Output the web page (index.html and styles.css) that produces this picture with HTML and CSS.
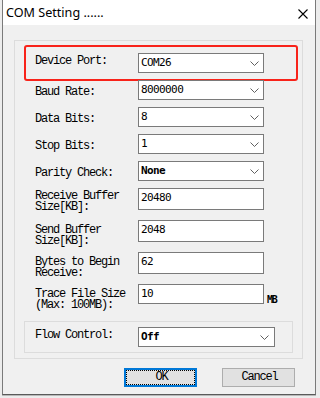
FILE: index.html
```html
<!DOCTYPE html>
<html>
<head>
  <title>COM Setting</title>
  <link rel="stylesheet" href="styles.css">
</head>
<body>
  <div class="window">
    <div class="titlebar">
      <span class="title">COM Setting ......</span>
      <svg class="close" width="10" height="10" viewBox="0 0 10 10">
        <path d="M0.5 0.5 L9.5 9.5 M9.5 0.5 L0.5 9.5" stroke="#000" stroke-width="1.1" fill="none"/>
      </svg>
    </div>

    <div class="client">
      <div class="group main">
        <div class="row marked">
          <label class="lbl">Device Port:</label>
          <div class="combo"><span>COM26</span><svg class="chev" width="9" height="5" viewBox="0 0 9 5"><path d="M0.5 0.5 L4.5 4.5 L8.5 0.5" stroke="#606060" fill="none"/></svg></div>
        </div>
        <div class="row">
          <label class="lbl">Baud Rate:</label>
          <div class="combo"><span>8000000</span><svg class="chev" width="9" height="5" viewBox="0 0 9 5"><path d="M0.5 0.5 L4.5 4.5 L8.5 0.5" stroke="#606060" fill="none"/></svg></div>
        </div>
        <div class="row">
          <label class="lbl">Data Bits:</label>
          <div class="combo"><span>8</span><svg class="chev" width="9" height="5" viewBox="0 0 9 5"><path d="M0.5 0.5 L4.5 4.5 L8.5 0.5" stroke="#606060" fill="none"/></svg></div>
        </div>
        <div class="row">
          <label class="lbl">Stop Bits:</label>
          <div class="combo"><span>1</span><svg class="chev" width="9" height="5" viewBox="0 0 9 5"><path d="M0.5 0.5 L4.5 4.5 L8.5 0.5" stroke="#606060" fill="none"/></svg></div>
        </div>
        <div class="row">
          <label class="lbl">Parity Check:</label>
          <div class="combo"><span class="bold">None</span><svg class="chev" width="9" height="5" viewBox="0 0 9 5"><path d="M0.5 0.5 L4.5 4.5 L8.5 0.5" stroke="#606060" fill="none"/></svg></div>
        </div>
        <div class="row tall first">
          <label class="lbl">Receive Buffer<br>Size[KB]:</label>
          <input class="edit" type="text" value="20480">
        </div>
        <div class="row tall">
          <label class="lbl">Send Buffer<br>Size[KB]:</label>
          <input class="edit" type="text" value="2048">
        </div>
        <div class="row tall">
          <label class="lbl">Bytes to Begin<br>Receive:</label>
          <input class="edit" type="text" value="62">
        </div>
        <div class="row tall trace">
          <label class="lbl">Trace File Size<br>(Max: 100MB):</label>
          <input class="edit short" type="text" value="10">
          <span class="unit">MB</span>
        </div>

        <div class="group flow">
          <div class="row">
            <label class="lbl">Flow Control:</label>
            <div class="combo wide"><span class="bold">Off</span><svg class="chev" width="9" height="5" viewBox="0 0 9 5"><path d="M0.5 0.5 L4.5 4.5 L8.5 0.5" stroke="#606060" fill="none"/></svg></div>
          </div>
        </div>
      </div>

      <div class="buttons">
        <button class="btn default">OK</button>
        <button class="btn">Cancel</button>
      </div>
    </div>
  </div>
</body>
</html>
```

FILE: styles.css
```css
* {
  margin: 0;
  padding: 0;
  box-sizing: border-box;
}

body {
  background: #ececec;
  width: 320px;
  height: 398px;
  overflow: hidden;
}

.window {
  margin-left: 2px;
  width: 314px;
  height: 395px;
  background: #f0f0f0;
  border: 1px solid #7a7a7a;
  border-top: none;
  border-bottom-color: #5a5a5a;
  box-shadow: 0 1px 0 #b8b8b8;
}

.titlebar {
  height: 25px;
  background: #fff;
  display: flex;
  align-items: center;
  justify-content: space-between;
  padding: 0 7px 0 3px;
}

.title {
  font-family: "Noto Sans", sans-serif;
  font-size: 12.6px;
  line-height: 25px;
  color: #000;
}

.close {
  margin-top: 2px;
}

.client {
  padding: 15px 0 0 11px;
}

/* group boxes */
.group {
  border: 1px solid #dcdcdc;
}

.group.main {
  width: 289px;
  height: 319px;
  padding-top: 12px;
}

.group.flow {
  width: 269px;
  height: 32px;
  margin: 17px 0 0 9px;
  padding-top: 5px;
}

.group.flow .row {
  padding-left: 10px;
}

.group.flow .lbl {
  padding-top: 3px;
}

/* rows */
.row {
  display: flex;
  align-items: flex-start;
  height: 20px;
  padding-left: 20px;
  position: relative;
}

.row.tall {
  height: 22px;
}

.row.trace {
  height: 20px;
}

.row + .row {
  margin-top: 7px;
}

.row.tall + .row.tall {
  margin-top: 10px;
}

.lbl {
  width: 103px;
  flex-shrink: 0;
  font-family: "Liberation Mono", monospace;
  font-size: 12px;
  letter-spacing: -1.2px;
  line-height: 11px;
  color: #000;
  padding-top: 7px;
}

.row.tall .lbl {
  padding-top: 5px;
}

.row.tall.first .lbl {
  padding-top: 3px;
}

.row.marked .lbl {
  padding-top: 3px;
}

.row.marked::before {
  content: '';
  position: absolute;
  left: 9px;
  top: -8px;
  width: 270px;
  height: 32px;
  border: 2px solid #f8231a;
  border-radius: 3px;
}

/* controls */
.combo {
  width: 126px;
  height: 20px;
  flex-shrink: 0;
  background: #fff;
  border: 1px solid #7a7a7a;
  display: flex;
  align-items: center;
  justify-content: space-between;
  padding: 0 4px 0 2px;
  font-family: "DejaVu Sans Mono", monospace;
  font-size: 11px;
  letter-spacing: -0.6px;
  line-height: 18px;
  color: #000;
}

.combo.wide {
  width: 137px;
  padding-right: 5px;
}

.combo .bold {
  font-weight: bold;
}

.chev {
  display: block;
}

.edit {
  width: 126px;
  height: 22px;
  flex-shrink: 0;
  background: #fff;
  border: 1px solid #7a7a7a;
  padding: 1px 2px 5px;
  font-family: "DejaVu Sans Mono", monospace;
  font-size: 11px;
  letter-spacing: -0.6px;
  line-height: 14px;
  color: #000;
  outline: none;
}

.edit.short {
  height: 20px;
  padding-bottom: 3px;
}

.unit {
  align-self: flex-end;
  margin-left: 3px;
  margin-bottom: -1px;
  font-family: "DejaVu Sans Mono", monospace;
  font-size: 10px;
  font-weight: bold;
  letter-spacing: -1.2px;
  line-height: 10px;
}

/* buttons */
.buttons {
  display: flex;
  justify-content: flex-end;
  gap: 25px;
  padding-right: 20px;
  margin-top: 9px;
}

.btn {
  width: 73px;
  height: 19px;
  background: #e1e1e1;
  border: 1px solid #adadad;
  font-family: "Liberation Mono", monospace;
  font-size: 12px;
  letter-spacing: -1.2px;
  line-height: 15px;
  color: #000;
  padding-left: 2px;
}

.btn.default {
  border: 2px solid #0078d7;
  outline: 1px dotted #000;
  outline-offset: -3px;
}
```
